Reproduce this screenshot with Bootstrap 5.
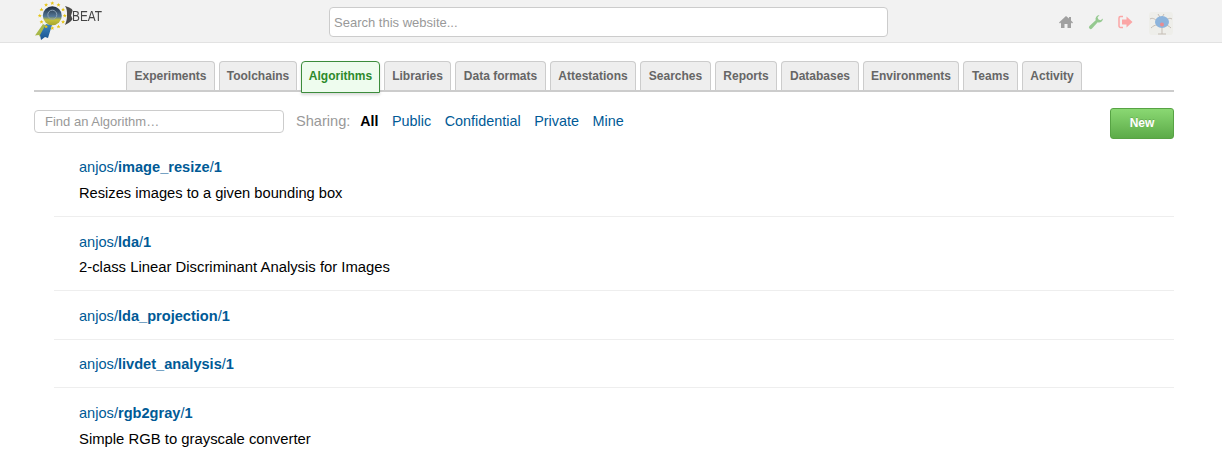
<!DOCTYPE html>
<html lang="en"><head><meta charset="utf-8"><title>Algorithms</title>
<link href="https://cdn.jsdelivr.net/npm/bootstrap@5.3.0/dist/css/bootstrap.min.css" rel="stylesheet">
<style>
html,body{height:459px;overflow:hidden}
body{font-family:"Liberation Sans",Arial,sans-serif;font-size:14.7px;color:#000;background:#fff}
a{text-decoration:none;color:#005a96}
.topbar{height:43px;background:#f2f2f2;border-bottom:1px solid #e2e2e2;padding:0 49px 0 35px}
.logo-box{width:76px;height:43px}
.site-search{width:559px;height:30px;margin-top:7px;border:1px solid #ccc;border-radius:4px;background:#fff;padding:0 4px;font-size:13px;color:#333;font-family:"Liberation Sans",Arial,sans-serif}
.site-search::placeholder,.find-box::placeholder{color:#999;opacity:1}
.brand-zone{width:294px}
.icon-zone{margin-left:auto;padding-top:10px}
.soft-icon{filter:blur(.35px)}
.home-ic{margin-top:4px}
.tool-ic{margin-left:14px;margin-top:4px}
.exit-ic{margin-left:14px;margin-top:5px}
.user-ic{margin-left:16px;margin-top:2px}
.wrapzone{margin:0 48px 0 34px}
.tabstrip{height:31px;margin-top:18px;border-bottom:2px solid #ccc;gap:4px;justify-content:center}
.tabitem{display:block;height:29px;padding:0;text-align:center;line-height:28px;font-size:12px;font-weight:700;color:#666;background:#eee;border:1px solid #ccc;border-bottom:0;border-radius:4px 4px 0 0}
.tabitem:nth-child(1){width:89px}.tabitem:nth-child(2){width:78px}.tabitem:nth-child(3){width:79px}.tabitem:nth-child(4){width:67px}.tabitem:nth-child(5){width:91px}.tabitem:nth-child(6){width:86px}.tabitem:nth-child(7){width:71px}.tabitem:nth-child(8){width:62px}.tabitem:nth-child(9){width:78px}.tabitem:nth-child(10){width:96px}.tabitem:nth-child(11){width:55px}.tabitem:nth-child(12){width:60px}
.tabitem.current{height:32px;color:#2c8a2c;background:#eefcee;border:1px solid #3c8c3c;box-shadow:0 2px 3px rgba(0,0,0,.15);position:relative}
.filterline{margin-top:16px;height:32px}
.find-box{width:250px;height:23px;border:1px solid #ccc;border-radius:4px;padding:0 10px;font-size:13px;margin-top:2px;font-family:"Liberation Sans",Arial,sans-serif}
.share-label,.share-link{line-height:26px}
.share-label{color:#999;margin-left:12px;font-size:14.6px}
.share-link{margin-left:13.500px;font-size:14.4px}
.share-link.current{color:#000;font-weight:700;margin-left:10px;font-size:14.2px}
.new-btn{width:64px;height:31px;line-height:29px;margin-left:auto;padding:0;text-align:center;font-size:12px;font-weight:700;color:#fff;background:linear-gradient(#8ad873,#5cab48);border:1px solid #57a344;border-radius:3px;text-shadow:0 -1px 0 rgba(0,0,0,.15)}
.algo-list{margin:0 0 0 20px}
.algo-row{padding:0 0 0 25px;border-bottom:1px solid #eee}
.algo-row .algo-title{display:block;line-height:20px;font-size:14.6px}
.algo-row p{margin:0;line-height:20px;font-size:14.85px}
.r1{height:77px;padding-top:17px}
.r1 p{margin-top:6px;font-size:14.68px}
.r2{height:74px;padding-top:15px}
.r2 p{margin-top:5px}
.r3{height:49px;padding-top:15px}
.r4{height:48px;padding-top:14px}
.r5{padding-top:15px;border:0}
.r5 p{margin-top:6px}
</style></head><body>
<header class="topbar d-flex">
 <div class="brand-zone flex-shrink-0">
  <div class="logo-box d-flex">
   <svg width="76" height="42" viewBox="0 0 76 42" class="soft-icon">
    <defs>
     <linearGradient id="discfill" x1="0" y1="0" x2="0" y2="1"><stop offset="0" stop-color="#1d2a3a"/><stop offset=".55" stop-color="#55799a"/><stop offset=".72" stop-color="#c4c13b"/><stop offset="1" stop-color="#a8a62e"/></linearGradient>
     <linearGradient id="tailfill" x1="0" y1="0" x2="0" y2="1"><stop offset="0" stop-color="#3f86bf"/><stop offset="1" stop-color="#17528f"/></linearGradient>
     <polygon id="tinystar" points="0,-2 .6,-.6 2,-.6 .9,.3 1.300,1.800 0,.9 -1.300,1.800 -.9,.3 -2,-.6 -.6,-.6" fill="#e6c515"/>
    </defs>
    <path d="M8 24 0 35.500l4-.5 1 2 7-11z" fill="#a8b84a"/><path d="M11 24 5 35l1 5 4-3 3 1 4-13z" fill="url(#tailfill)"/>
    <circle cx="17.300" cy="15.700" r="9.500" fill="url(#discfill)"/><circle cx="17.300" cy="14.700" r="4.500" fill="none" stroke="#8ba2b8" stroke-width="1"/>
    <use href="#tinystar" x="17.300" y="3.200"/><use href="#tinystar" x="23.500" y="4.900"/><use href="#tinystar" x="28.100" y="9.500"/><use href="#tinystar" x="29.800" y="15.700"/><use href="#tinystar" x="28.100" y="21.900"/><use href="#tinystar" x="23.500" y="26.500"/><use href="#tinystar" x="17.300" y="28.200"/><use href="#tinystar" x="11.100" y="26.500"/><use href="#tinystar" x="6.500" y="21.900"/><use href="#tinystar" x="4.800" y="15.700"/><use href="#tinystar" x="6.500" y="9.500"/><use href="#tinystar" x="11.100" y="4.900"/>
    <path d="M30 6C34 7.500 38 8.500 37.500 11L36 15.500 37.500 19C36 22 33 23.500 30 25 32 20 32 18 32 15 32 11 32 9 30 6z" fill="#4a4a4a"/>
    <text x="37" y="20.500" font-family="Liberation Sans" font-size="14" fill="#444" textLength="30" lengthAdjust="spacingAndGlyphs">BEAT</text>
   </svg>
  </div>
 </div>
 <input class="site-search" type="text" placeholder="Search this website...">
 <div class="icon-zone d-flex align-items-start">
  <svg width="16" height="16" viewBox="0 0 16 16" class="soft-icon home-ic"><path d="M8 2 1 8.500l1 1 1-1V14h3.500v-4h3v4H13V8.500l1 1 1-1-2-2V3h-2v1.600z" fill="#a0a0a0"/></svg>
  <svg width="16" height="16" viewBox="0 0 16 16" class="soft-icon tool-ic"><path d="M15 4.500a4 4 0 0 1-5.300 3.800L4 14.500a1.700 1.700 0 0 1-2.500-2.500L7.700 6.300A4 4 0 0 1 11.500 1l-2 2.500 1 2 2 .7z" fill="#95c990"/></svg>
  <svg width="15" height="14" viewBox="0 0 15 14" class="soft-icon exit-ic"><path d="M5 1.500H2.500A1.500 1.500 0 0 0 1 3v8a1.500 1.500 0 0 0 1.500 1.500H5" fill="none" stroke="#fba6a6" stroke-width="1.500"/><path d="M8.500 1.500 14.500 7l-6 5.500V9.500H4v-5h4.500z" fill="#fba6a6"/></svg>
  <svg width="24" height="23" viewBox="0 0 24 23" class="soft-icon user-ic"><rect width="24" height="23" rx="3" fill="#eeeeea"/><path d="M1 7c3-2 6 1 8 3M23 7c-3-2-6 1-8 3M2 16c2-2 4-3 6-3M22 16c-2-2-4-3-6-3M9 2l3 5 3-5M13 16v6M9 22h8" stroke="#c5bdb5" fill="none"/><ellipse cx="13" cy="10" rx="7" ry="6" fill="#8db4dc"/><circle cx="13" cy="12.500" r="2" fill="#e98b90"/></svg>
 </div>
</header>
<main class="wrapzone">
 <nav class="tabstrip d-flex">
  <a class="tabitem" href="#">Experiments</a><a class="tabitem" href="#">Toolchains</a><a class="tabitem current" href="#">Algorithms</a><a class="tabitem" href="#">Libraries</a><a class="tabitem" href="#">Data formats</a><a class="tabitem" href="#">Attestations</a><a class="tabitem" href="#">Searches</a><a class="tabitem" href="#">Reports</a><a class="tabitem" href="#">Databases</a><a class="tabitem" href="#">Environments</a><a class="tabitem" href="#">Teams</a><a class="tabitem" href="#">Activity</a>
 </nav>
 <div class="filterline d-flex align-items-start">
  <input class="find-box" type="text" placeholder="Find an Algorithm…">
  <span class="share-label">Sharing:</span>
  <a class="share-link current" href="#">All</a><a class="share-link" href="#">Public</a><a class="share-link" href="#">Confidential</a><a class="share-link" href="#">Private</a><a class="share-link" href="#">Mine</a>
  <a class="new-btn" href="#">New</a>
 </div>
 <div class="algo-list">
  <div class="algo-row r1"><a class="algo-title" href="#">anjos/<b>image_resize</b>/<b>1</b></a><p>Resizes images to a given bounding box</p></div>
  <div class="algo-row r2"><a class="algo-title" href="#">anjos/<b>lda</b>/<b>1</b></a><p>2-class Linear Discriminant Analysis for Images</p></div>
  <div class="algo-row r3"><a class="algo-title" href="#">anjos/<b>lda_projection</b>/<b>1</b></a></div>
  <div class="algo-row r4"><a class="algo-title" href="#">anjos/<b>livdet_analysis</b>/<b>1</b></a></div>
  <div class="algo-row r5"><a class="algo-title" href="#">anjos/<b>rgb2gray</b>/<b>1</b></a><p>Simple RGB to grayscale converter</p></div>
 </div>
</main>
<script src="https://cdn.jsdelivr.net/npm/bootstrap@5.3.0/dist/js/bootstrap.bundle.min.js"></script>
</body></html>
